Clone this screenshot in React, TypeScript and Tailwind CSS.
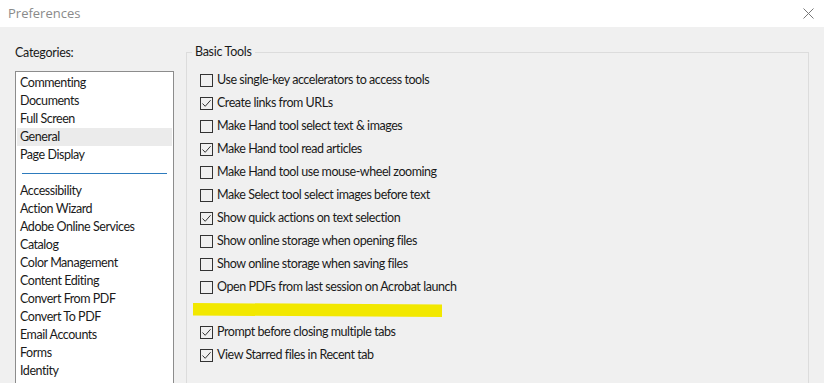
import { FC } from 'react';

const categoriesTop = ['Commenting', 'Documents', 'Full Screen', 'General', 'Page Display'];
const categoriesBottom = [
  'Accessibility',
  'Action Wizard',
  'Adobe Online Services',
  'Catalog',
  'Color Management',
  'Content Editing',
  'Convert From PDF',
  'Convert To PDF',
  'Email Accounts',
  'Forms',
  'Identity',
];

const options = [
  { label: 'Use single-key accelerators to access tools', checked: false },
  { label: 'Create links from URLs', checked: true },
  { label: 'Make Hand tool select text & images', checked: false },
  { label: 'Make Hand tool read articles', checked: true },
  { label: 'Make Hand tool use mouse-wheel zooming', checked: false },
  { label: 'Make Select tool select images before text', checked: false },
  { label: 'Show quick actions on text selection', checked: true },
  { label: 'Show online storage when opening files', checked: false },
  { label: 'Show online storage when saving files', checked: false },
  { label: 'Open PDFs from last session on Acrobat launch', checked: false },
];

const extraOptions = [
  { label: 'Prompt before closing multiple tabs', checked: true },
  { label: 'View Starred files in Recent tab', checked: true },
];

const CheckRow: FC<{ label: string; checked: boolean }> = ({ label, checked }) => (
  <div className="flex items-center h-[23px]">
    <span className="w-[13px] h-[13px] border border-[#333] bg-[#f0f0f0] flex items-center justify-center shrink-0">
      {checked && (
        <svg width="11" height="11" viewBox="0 0 11 11">
          <path d="M1.5 5.5 L4.2 8.3 L9.6 2.2" fill="none" stroke="#333" strokeWidth="1" />
        </svg>
      )}
    </span>
    <span className="ml-[4px] text-[12.5px] tracking-[-0.45px] text-[#1a1a1a] whitespace-nowrap">{label}</span>
  </div>
);

export default function App() {
  return (
    <div className="w-[824px] h-[383px] overflow-hidden bg-[#f0f0f0] flex flex-col" style={{ fontFamily: 'Lato, "Open Sans", sans-serif' }}>
      {/* title bar */}
      <div className="h-[27px] bg-white flex items-center justify-between pl-[8px] pr-[10px] shrink-0">
        <span className="text-[13px] text-[#8a8a8a]" style={{ fontFamily: '"Open Sans", sans-serif' }}>Preferences</span>
        <svg width="11" height="11" viewBox="0 0 11 11">
          <path d="M0.5 0.5 L10.5 10.5 M10.5 0.5 L0.5 10.5" stroke="#777" strokeWidth="1" />
        </svg>
      </div>

      <div className="flex flex-1 min-h-0 pl-[15px] pt-[17px]">
        {/* categories */}
        <div className="w-[159px] flex flex-col">
          <div className="text-[12.5px] tracking-[-0.3px] text-[#1a1a1a] h-[18px] leading-[18px]">Categories:</div>
          <div className="mt-[9px] flex-1 bg-white border border-[#8c8c8c] border-b-0 pt-[2px] px-[1px]">
            {categoriesTop.map((c) => (
              <div
                key={c}
                className={`h-[18px] leading-[18px] pl-[3px] text-[12.5px] tracking-[-0.45px] text-[#1a1a1a] whitespace-nowrap ${c === 'General' ? 'bg-[#ebebeb]' : ''}`}
              >
                {c}
              </div>
            ))}
            <div className="h-[18px] flex items-center px-[5px]">
              <div className="h-px w-full bg-[#2d7bbd]" />
            </div>
            {categoriesBottom.map((c) => (
              <div key={c} className="h-[18px] leading-[18px] pl-[3px] text-[12.5px] tracking-[-0.45px] text-[#1a1a1a] whitespace-nowrap">
                {c}
              </div>
            ))}
          </div>
        </div>

        {/* basic tools group */}
        <div className="ml-[12px] w-[623px] relative mt-[8px]">
          <div className="h-full border border-[#dcdcdc] border-b-0 pl-[13px] pt-[16px]">
            {options.map((o) => (
              <CheckRow key={o.label} {...o} />
            ))}
            <div className="h-[22px] pt-[4px]">
              <svg width="250" height="15" viewBox="0 0 250 15" className="-ml-[7px] block">
                <path d="M0 0 L249 1.5 L249 14 L0 12.5 Z" fill="#f2e800" />
              </svg>
            </div>
            {extraOptions.map((o) => (
              <CheckRow key={o.label} {...o} />
            ))}
          </div>
          <span className="absolute -top-[9px] left-[6px] px-[3px] bg-[#f0f0f0] text-[12.5px] tracking-[-0.3px] text-[#1a1a1a] leading-[18px]">
            Basic Tools
          </span>
        </div>
      </div>
    </div>
  );
}
